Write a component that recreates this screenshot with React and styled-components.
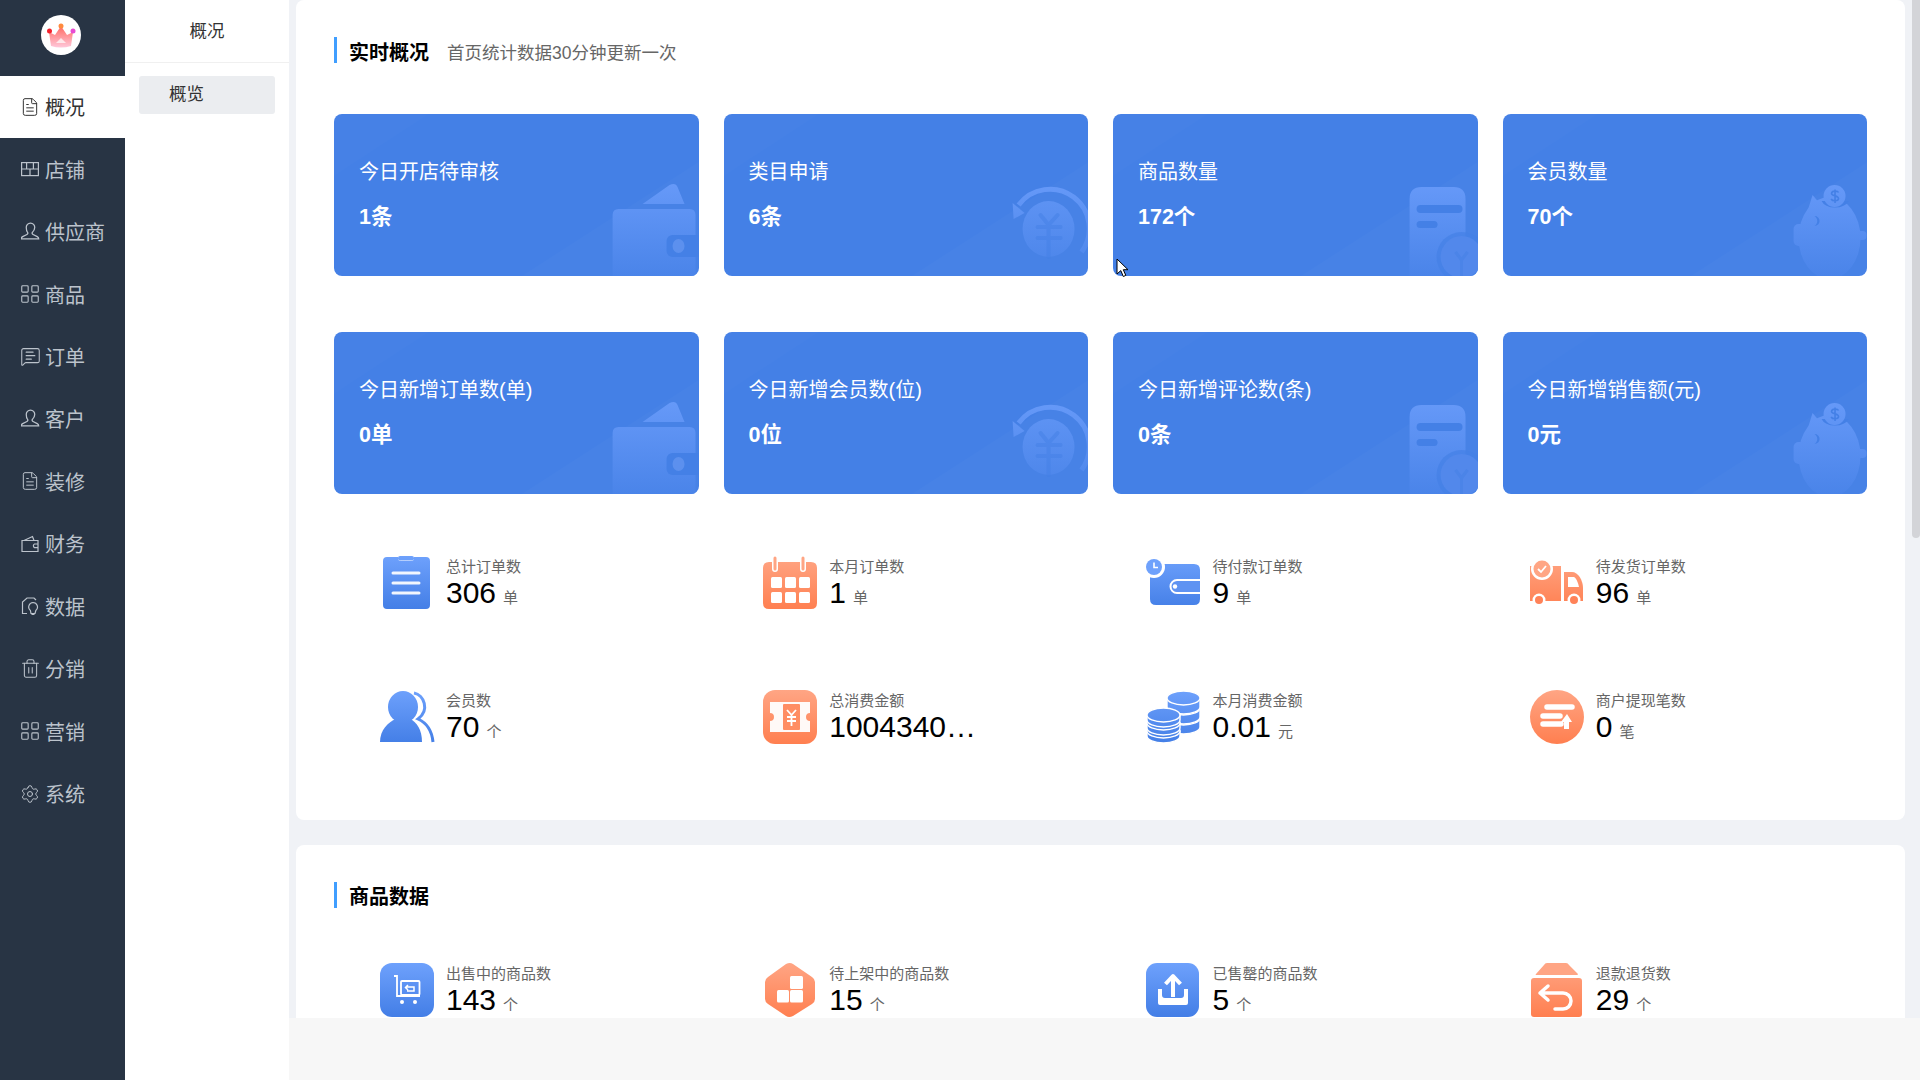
import React from "react";
import styled, { createGlobalStyle } from "styled-components";
import { FileText, LayoutGrid, MessageSquareText, Settings, Trash2 } from "lucide-react";

const GlobalStyle = createGlobalStyle`
  html, body, #root {
    margin: 0;
    height: 100%;
  }
  body {
    font-family: "Liberation Sans", "Noto Sans CJK SC", sans-serif;
    overflow: hidden;
  }
`;

const StoreIcon = () => (
  <svg width="18" height="18" viewBox="0 0 18 18" fill="none" stroke="currentColor" strokeWidth="1.2">
    <rect x="0.6" y="2.6" width="16.8" height="13" />
    <path d="M0.6 9h16.8M5.6 2.6v6.4M12.4 2.6v6.4M9 9v6.6" />
  </svg>
);

const PersonIcon = () => (
  <svg width="19" height="19" viewBox="0 0 18 18" fill="none" stroke="currentColor" strokeWidth="1.2">
    <path d="M9 1a4 4 0 0 1 4 4.2c0 2-1.2 3.6-2.2 4.6-.6.7-.2 1.6.6 2l4 2c1 .5 1.4 1.4 1.4 2.2H.2c0-.8.4-1.700 1.400-2.200l4-2c.8-.4 1.200-1.300.6-2C5.200 8.800 5 7.200 5 5.200A4 4 0 0 1 9 1z" />
  </svg>
);

const WalletIcon = () => (
  <svg width="18" height="18" viewBox="0 0 18 18" fill="none" stroke="currentColor" strokeWidth="1.2">
    <path d="M3 5.500 11.500 1.500 13 5.500M1 5.500h16v11H1z" />
    <path d="M17 9h-3.500a2 2 0 0 0 0 3.600H17" />
  </svg>
);

const ReportIcon = () => (
  <svg width="18" height="18" viewBox="0 0 18 18" fill="none" stroke="currentColor" strokeWidth="1.2">
    <path d="M6 16.500H1.500V5L6 1h7l2 2" />
    <path d="M12 5.500a4.500 4.500 0 0 1 2.800 8L14 16.500h-4l-.6-3a4.500 4.500 0 0 1 2.600-8zM10.500 17.500h3" />
  </svg>
);

const menu = [
  { name: "概况", icon: <FileText size={20} strokeWidth={1.2} />, active: true },
  { name: "店铺", icon: <StoreIcon /> },
  { name: "供应商", icon: <PersonIcon /> },
  { name: "商品", icon: <LayoutGrid size={22} strokeWidth={1.2} /> },
  { name: "订单", icon: <MessageSquareText size={21} strokeWidth={1.2} /> },
  { name: "客户", icon: <PersonIcon /> },
  { name: "装修", icon: <FileText size={20} strokeWidth={1.2} /> },
  { name: "财务", icon: <WalletIcon /> },
  { name: "数据", icon: <ReportIcon /> },
  { name: "分销", icon: <Trash2 size={21} strokeWidth={1.2} /> },
  { name: "营销", icon: <LayoutGrid size={22} strokeWidth={1.2} /> },
  { name: "系统", icon: <Settings size={20} strokeWidth={1.2} /> },
];

const BG = "#4480e6";

const WalletDecor = () => (
  <g fill="url(#decor)">
    <path d="M309 90 336 71q6-3 8 2l7 17z" />
    <path d="M279 101q0-6 6-6h71q6 0 6 6v61h-83z" />
    <rect x="333" y="121" width="40" height="22" rx="6" fill={BG} />
    <ellipse cx="345" cy="132" rx="6" ry="7" fill="#5c90ee" />
  </g>
);

const CoinDecor = () => (
  <g>
    <path d="M295 91A38 38 0 1 1 358 138" fill="none" stroke="url(#decor)" strokeWidth="5" />
    <path d="M289 89 301 99 290 105z" fill="url(#decor)" />
    <ellipse cx="325" cy="115" rx="26" ry="28" fill="url(#decor)" opacity=".85" />
    <path d="M317 101 325 111 334 101M314 113H337M314 124H337M325 111V143" fill="none" stroke={BG} strokeWidth="4" strokeLinecap="round" opacity=".5" />
  </g>
);

const DocDecor = () => (
  <g>
    <path d="M297 85q0-12 12-12h32q12 0 12 12v77h-56z" fill="url(#decor)" />
    <rect x="304" y="91" width="46" height="8" rx="4" fill={BG} />
    <rect x="304" y="107" width="21" height="7" rx="3.500" fill={BG} />
    <circle cx="349" cy="143" r="25" fill={BG} opacity=".7" />
    <circle cx="349" cy="143" r="21" fill="#5288eb" />
    <path d="M343 138 349 146 355 138M349 146V162" fill="none" stroke={BG} strokeWidth="3" opacity=".5" />
  </g>
);

const PiggyDecor = () => (
  <g>
    <path d="M310 81 320 93 312 105 304 100z" fill="url(#decor)" />
    <ellipse cx="327" cy="124" rx="31" ry="41" fill="url(#decor)" />
    <rect x="291" y="110" width="13" height="22" rx="5" fill="url(#decor)" />
    <rect x="354" y="117" width="10" height="9" rx="4" fill="url(#decor)" />
    <path d="M319 87a14 9 0 0 0 27 0z" fill={BG} />
    <circle cx="332" cy="82" r="11" fill="url(#decor)" />
    <path d="M336 78.500c-1-2-7-2-7 1 0 3 7 1.500 7 5 0 3-6 3-7.500.5M332.500 75.500V89" fill="none" stroke={BG} strokeWidth="1.600" />
    <path d="M312 102a5 5 0 0 1 0 10 6 6 0 0 0 0-10z" fill={BG} />
  </g>
);

const decorByKind = { wallet: WalletDecor, coin: CoinDecor, doc: DocDecor, piggy: PiggyDecor };

const topCards = [
  { title: "今日开店待审核", value: "1条", kind: "wallet" },
  { title: "类目申请", value: "6条", kind: "coin" },
  { title: "商品数量", value: "172个", kind: "doc" },
  { title: "会员数量", value: "70个", kind: "piggy" },
  { title: "今日新增订单数(单)", value: "0单", kind: "wallet" },
  { title: "今日新增会员数(位)", value: "0位", kind: "coin" },
  { title: "今日新增评论数(条)", value: "0条", kind: "doc" },
  { title: "今日新增销售额(元)", value: "0元", kind: "piggy" },
];

const Clipboard = () => (
  <>
    <path d="M8 1h11v1q0 3 3 3h10q3 0 3-3V1h12q4 0 4 4v44q0 4-4 4H8q-4 0-4-4V5q0-4 4-4z" fill="url(#blueTone)" />
    <path d="M14 17H40M14 27H40M14 37H40" stroke="#fff" strokeWidth="3" strokeLinecap="round" opacity=".92" />
    <rect x="19" y="0" width="16" height="4.500" rx="2" fill="url(#blueTone)" />
  </>
);

const Calendar = () => (
  <>
    <path d="M6 6h42q6 0 6 6v35q0 6-6 6H6q-6 0-6-6V12q0-6 6-6z" fill="url(#orangeTone)" />
    <path d="M12 2v11M40 2v11" stroke="#fff" strokeWidth="6" strokeLinecap="round" />
    <path d="M12 2v11M40 2v11" stroke="#ffa584" strokeWidth="3" strokeLinecap="round" />
    {[8, 22, 36].map((x) =>
      [21, 36].map((y) => <rect key={`${x}-${y}`} x={x} y={y} width="11" height="11" rx="1.500" fill="#fff" />)
    )}
  </>
);

const Members = () => (
  <>
    <path d="M34 3C44 5 50 20 38 29 47 33 52 42 53 52" fill="none" stroke="url(#blueTone)" strokeWidth="3" />
    <ellipse cx="23" cy="17" rx="15" ry="16" fill="url(#blueTone)" />
    <path d="M0 52C0 40 8 32 16 29H30C37 32 42 40 42 52z" fill="url(#blueTone)" />
  </>
);

const Ticket = () => (
  <>
    <rect x="0" y="0" width="54" height="54" rx="12" fill="url(#orangeTone)" />
    <path d="M7 12H47V23A4 4 0 0 0 47 31V42H7V31A4 4 0 0 0 7 23z" fill="#fff" opacity=".95" />
    <rect x="20" y="14" width="17" height="26" rx="1" fill="#ff8d63" />
    <path d="M24 20 28.500 25 33 20M24 27H33M24 31H33M28.500 25V36" fill="none" stroke="#fff" strokeWidth="1.800" />
  </>
);

const WalletClock = () => (
  <>
    <path d="M10 8H48q6 0 6 6V43q0 6-6 6H10q-6 0-6-6V14q0-6 6-6z" fill="url(#blueTone)" />
    <circle cx="8" cy="11" r="11" fill="#fff" />
    <circle cx="8" cy="11" r="8" fill="#6ea1fc" />
    <path d="M8 6.500V11.500H12" fill="none" stroke="#fff" strokeWidth="1.600" />
    <path d="M54 24H31a6.500 6.500 0 0 0 0 13H54" fill="#5f93f2" stroke="#fff" strokeWidth="2" />
    <circle cx="29" cy="30.500" r="2.200" fill="#fff" />
  </>
);

const Truck = () => (
  <>
    <path d="M1 10H32V45H1z" fill="url(#orangeTone)" />
    <path d="M35 16H43C49 16 54 24 54 32V45H35z" fill="url(#orangeTone)" />
    <path d="M39 21H45C47 22 49 26 50 31H39z" fill="#fff" />
    <circle cx="13" cy="13" r="11" fill="#fff" />
    <circle cx="13" cy="13" r="8.500" fill="#ffa584" />
    <path d="M9 13 12 16 17 10" fill="none" stroke="#fff" strokeWidth="1.800" />
    <circle cx="10" cy="44" r="6.500" fill="#fff" />
    <circle cx="10" cy="44" r="4" fill="#ff8258" />
    <circle cx="45" cy="44" r="6.500" fill="#fff" />
    <circle cx="45" cy="44" r="4" fill="#ff8258" />
  </>
);

const CoinStack = () => {
  const disc = (cx, cy, side, key) => (
    <g key={key}>
      <path d={`M${cx - 16.500} ${cy}v${side}a16.500 7 0 0 0 33 0v-${side}z`} fill="url(#blueTone)" stroke="#fff" strokeWidth="1.400" />
      <ellipse cx={cx} cy={cy} rx="16.500" ry="7" fill="url(#blueTone)" stroke="#fff" strokeWidth="1.400" />
    </g>
  );
  return (
    <>
      {[28, 18, 8].map((y, i) => disc(37.500, y, 9, `r${i}`))}
      {[41, 33, 25].map((y, i) => disc(17.500, y, 5, `l${i}`))}
    </>
  );
};

const Withdraw = () => (
  <>
    <circle cx="27" cy="27" r="27" fill="url(#orangeTone)" />
    <path d="M17 17H42M13 26H30M13 34H31" stroke="#fff" strokeWidth="5.500" strokeLinecap="round" />
    <path d="M31 32 37 24 42 32H39V39H34V32z" fill="#fff" />
  </>
);

const Cart = () => (
  <>
    <rect x="0" y="0" width="54" height="54" rx="12" fill="url(#blueTone)" />
    <path d="M14 13H17V33H40" fill="none" stroke="#fff" strokeWidth="1.800" />
    <rect x="21" y="18" width="18.500" height="14" rx="1" fill="none" stroke="#fff" strokeWidth="1.800" />
    <path d="M26 24 H34 V28 H27M28 22 25.500 24.500 28 27" fill="none" stroke="#fff" strokeWidth="1.500" />
    <circle cx="22" cy="39" r="2" fill="#fff" />
    <circle cx="35" cy="39" r="2" fill="#fff" />
  </>
);

const Blocks = () => (
  <>
    <path d="M23 1q4-2 7 0L49 14q3 2 3 5V36q0 3-3 5L30 53q-4 2-7 0L5 41q-3-2-3-5V19q0-3 3-5z" fill="url(#orangeTone)" />
    <rect x="27" y="13" width="13" height="13" rx="1.500" fill="#fff" />
    <rect x="14" y="27" width="12" height="12.500" rx="1.500" fill="#fff" />
    <rect x="27" y="27" width="13" height="12.500" rx="1.500" fill="#fff" />
  </>
);

const Upload = () => (
  <>
    <rect x="0" y="0" width="53" height="54" rx="11" fill="url(#blueTone)" />
    <path d="M27 34V14M19.500 21 27 13 34.500 21" fill="none" stroke="#fff" strokeWidth="4" strokeLinejoin="round" />
    <path d="M12 26h4v6c0 2 1 3 3 3h16c2 0 3-1 3-3v-6h4v14q0 2-2 2H14q-2 0-2-2z" fill="#fff" />
  </>
);

const ReturnBox = () => (
  <>
    <path d="M17 0H36Q38 0 39 2L48 11q0 1-1 1H6q-1 0 0-1L14 2Q15 0 17 0z" fill="#ffa584" />
    <rect x="1" y="15" width="51" height="39" rx="3" fill="url(#orangeTone)" />
    <path d="M18 23 10 30 18 37M10 30H33A8 8 0 0 1 33 46H25" fill="none" stroke="#fff" strokeWidth="3.500" strokeLinecap="round" strokeLinejoin="round" />
  </>
);

const orderStats = [
  { label: "总计订单数", value: "306", unit: "单", icon: <Clipboard />, nudge: 1 },
  { label: "本月订单数", value: "1", unit: "单", icon: <Calendar /> },
  { label: "待付款订单数", value: "9", unit: "单", icon: <WalletClock />, nudge: 1 },
  { label: "待发货订单数", value: "96", unit: "单", icon: <Truck />, nudge: 1 },
  { label: "会员数", value: "70", unit: "个", icon: <Members /> },
  { label: "总消费金额", value: "1004340…", icon: <Ticket /> },
  { label: "本月消费金额", value: "0.01", unit: "元", icon: <CoinStack />, nudge: 1 },
  { label: "商户提现笔数", value: "0", unit: "笔", icon: <Withdraw /> },
];

const goodsStats = [
  { label: "出售中的商品数", value: "143", unit: "个", icon: <Cart /> },
  { label: "待上架中的商品数", value: "15", unit: "个", icon: <Blocks /> },
  { label: "已售罄的商品数", value: "5", unit: "个", icon: <Upload />, nudge: 1 },
  { label: "退款退货数", value: "29", unit: "个", icon: <ReturnBox /> },
];

const StatList = ({ items, gap }) => (
  <StatGrid $gap={gap}>
    {items.map((item) => (
      <Stat key={item.label}>
        <StatIcon viewBox={`${item.nudge || 0} 0 54 54`}>{item.icon}</StatIcon>
        <StatText>
          <StatLabel>{item.label}</StatLabel>
          <StatValue>
            {item.value}
            {item.unit && <StatUnit>{item.unit}</StatUnit>}
          </StatValue>
        </StatText>
      </Stat>
    ))}
  </StatGrid>
);

export default function App() {
  return (
    <Page>
      <GlobalStyle />
      <Gradients width="0" height="0">
        <defs>
          <linearGradient id="blueTone" x1="0" y1="0" x2="0" y2="54" gradientUnits="userSpaceOnUse">
            <stop offset="0" stopColor="#6ea1fc" />
            <stop offset="1" stopColor="#437ee6" />
          </linearGradient>
          <linearGradient id="orangeTone" x1="0" y1="0" x2="0" y2="54" gradientUnits="userSpaceOnUse">
            <stop offset="0" stopColor="#ffa584" />
            <stop offset="1" stopColor="#ff7f50" />
          </linearGradient>
          <linearGradient id="decor" x1="0" y1="70" x2="0" y2="162" gradientUnits="userSpaceOnUse">
            <stop offset="0" stopColor="#6699f8" />
            <stop offset="1" stopColor="#4a84e9" />
          </linearGradient>
        </defs>
      </Gradients>

      <Sidebar>
        <LogoBar>
          <svg width="40" height="40" viewBox="0 0 40 40">
            <defs>
              <linearGradient id="crown" x1="0" y1="0" x2="0" y2="1">
                <stop offset="0" stopColor="#ff6a60" />
                <stop offset="1" stopColor="#ffc8da" />
              </linearGradient>
            </defs>
            <circle cx="20" cy="20" r="20" fill="#fff" />
            <path d="M8 17 14 20 20 11 26 20 32 17 30 31Q20 34 10 31z" fill="url(#crown)" />
            <path d="M15 28 20 23 25 28z" fill="#fff" opacity=".7" />
            <circle cx="8.500" cy="16" r="2.500" fill="#f5222d" />
            <circle cx="20" cy="11" r="2.500" fill="#ff8a3d" />
            <circle cx="32" cy="16" r="2.500" fill="#e84bd2" />
          </svg>
        </LogoBar>
        {menu.map((item) => (
          <MenuItem key={item.name} $active={item.active}>
            <MenuIcon>{item.icon}</MenuIcon>
            {item.name}
          </MenuItem>
        ))}
      </Sidebar>

      <SubNav>
        <SubNavTitle>概况</SubNavTitle>
        <SubNavItem>概览</SubNavItem>
      </SubNav>

      <MainColumn>
        <ScrollRow>
          <Content>
            <Section>
              <SectionTitle>
                <TitleText>实时概况</TitleText>
                <SectionHint>首页统计数据30分钟更新一次</SectionHint>
              </SectionTitle>
              <CardGrid>
                {topCards.map((card) => {
                  const Decor = decorByKind[card.kind];
                  return (
                    <Card key={card.title}>
                      <CardArt viewBox="0 0 365 162" preserveAspectRatio="none">
                        <path d="M0 0H95L0 62z" fill="#fff" opacity=".012" />
                        <path d="M188 162 365 48V162z" fill="#fff" opacity=".018" />
                        <Decor />
                      </CardArt>
                      <CardTitle>{card.title}</CardTitle>
                      <CardValue>{card.value}</CardValue>
                    </Card>
                  );
                })}
              </CardGrid>
              <StatList items={orderStats} gap={61.5} />
            </Section>
            <GoodsSection>
              <SectionTitle>
                <TitleText>商品数据</TitleText>
              </SectionTitle>
              <StatList items={goodsStats} gap={55} />
            </GoodsSection>
          </Content>
          <ScrollTrack>
            <ScrollThumb />
          </ScrollTrack>
        </ScrollRow>
        <Footer />
      </MainColumn>

      <Cursor width="13" height="20" viewBox="0 0 13 20">
        <path d="M1 1V16L4.800 12.600 7.300 18.500 9.800 17.400 7.300 11.700H12z" fill="#fff" stroke="#000" strokeWidth="1" />
      </Cursor>
    </Page>
  );
}

const Page = styled.div`
  position: relative;
  display: flex;
  height: 100vh;
  overflow: hidden;
  background: #fff;
`;

const Gradients = styled.svg`
  position: absolute;
`;

const Sidebar = styled.aside`
  width: 125px;
  flex-shrink: 0;
  background: #283444;
`;

const LogoBar = styled.div`
  height: 75.5px;
  display: flex;
  align-items: center;
  justify-content: center;
  padding: 0 3px 5px 0;
  box-sizing: border-box;
`;

const MenuItem = styled.div`
  height: 62.45px;
  display: flex;
  align-items: center;
  padding-left: 19px;
  font-size: 20px;
  color: ${(p) => (p.$active ? "#333" : "#bcc3cc")};
  background: ${(p) => (p.$active ? "#fff" : "transparent")};
`;

const MenuIcon = styled.span`
  width: 22px;
  height: 22px;
  margin-right: 4px;
  display: flex;
  align-items: center;
  justify-content: center;
`;

const SubNav = styled.nav`
  width: 164px;
  flex-shrink: 0;
  background: #fff;
`;

const SubNavTitle = styled.div`
  height: 62px;
  line-height: 62px;
  text-align: center;
  font-size: 17.5px;
  color: #333;
  border-bottom: 1px solid #f0f0f0;
`;

const SubNavItem = styled.div`
  margin: 13px 14px 0;
  height: 38px;
  line-height: 36px;
  padding-left: 30px;
  font-size: 17.5px;
  color: #333;
  background: #ebedf0;
  border-radius: 3px;
`;

const MainColumn = styled.div`
  flex: 1;
  min-width: 0;
  display: flex;
  flex-direction: column;
`;

const ScrollRow = styled.div`
  flex: 1;
  min-height: 0;
  display: flex;
  overflow: hidden;
`;

const Content = styled.main`
  flex: 1;
  min-width: 0;
  padding: 0 7px;
  background: #f0f2f6;
`;

const ScrollTrack = styled.div`
  width: 8px;
  flex-shrink: 0;
  background: #f0f2f6;
`;

const ScrollThumb = styled.div`
  height: 538px;
  background: #d3d4d8;
  border-radius: 0 0 4px 4px;
`;

const Footer = styled.footer`
  height: 62px;
  flex-shrink: 0;
  background: #f7f7f7;
`;

const Section = styled.section`
  background: #fff;
  border-radius: 8px;
  padding: 37px 38px 75.5px;
`;

const GoodsSection = styled(Section)`
  margin-top: 25px;
  padding-bottom: 0;
  min-height: 1085px;
`;

const SectionTitle = styled.h2`
  margin: 0;
  height: 26px;
  padding-left: 12px;
  border-left: 3px solid #409eff;
  display: flex;
  align-items: center;
  font-size: 20px;
  font-weight: 700;
  color: #000;
`;

const TitleText = styled.span`
  position: relative;
  top: 1px;
`;

const SectionHint = styled.span`
  position: relative;
  top: 1px;
  margin-left: 18px;
  font-size: 17.5px;
  font-weight: 400;
  color: #666;
`;

const CardGrid = styled.div`
  margin-top: 51px;
  display: grid;
  grid-template-columns: repeat(4, 1fr);
  gap: 56px 25px;
`;

const Card = styled.div`
  position: relative;
  height: 162px;
  box-sizing: border-box;
  padding: 43.5px 25px 0;
  border-radius: 8px;
  overflow: hidden;
  background: ${BG};
  color: #fff;
`;

const CardArt = styled.svg`
  position: absolute;
  inset: 0;
  width: 100%;
  height: 100%;
`;

const CardTitle = styled.div`
  position: relative;
  font-size: 20px;
  line-height: 28px;
`;

const CardValue = styled.div`
  position: relative;
  margin-top: 17px;
  font-size: 21.5px;
  line-height: 28px;
  font-weight: 700;
`;

const StatGrid = styled.div`
  margin-top: ${(p) => p.$gap}px;
  display: grid;
  grid-template-columns: repeat(4, 1fr);
  row-gap: 80.5px;
`;

const Stat = styled.div`
  height: 54px;
  display: flex;
  gap: 12px;
  padding-left: 46px;
  min-width: 0;
`;

const StatIcon = styled.svg`
  width: 54px;
  height: 54px;
  flex-shrink: 0;
  overflow: visible;
`;

const StatText = styled.div`
  min-width: 0;
  padding-top: 1px;
`;

const StatLabel = styled.div`
  font-size: 15px;
  line-height: 20px;
  color: #666;
`;

const StatValue = styled.div`
  font-size: 30px;
  line-height: 32px;
  color: #000;
  white-space: nowrap;
`;

const StatUnit = styled.span`
  margin-left: 7px;
  font-size: 15px;
  line-height: 1;
  color: #666;
`;

const Cursor = styled.svg`
  position: absolute;
  left: 1116px;
  top: 258px;
`;
